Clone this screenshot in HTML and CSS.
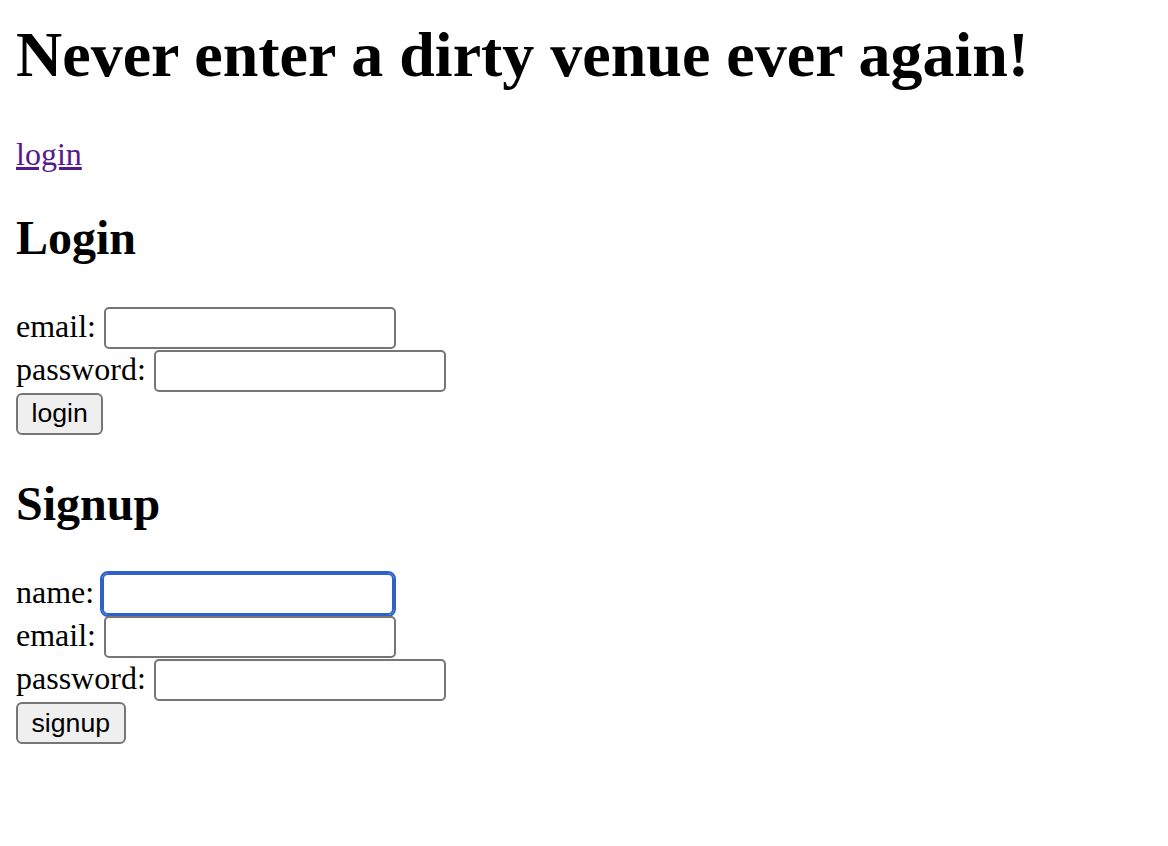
FILE: index.html
```html
<!DOCTYPE html>
<html>
<head>
<meta charset="utf-8">
<title>Venues</title>
<link rel="stylesheet" href="styles.css">
</head>
<body>
<h1 class="title">Never enter a dirty venue ever again!</h1>
<p class="nav"><a class="nav-link" href="#">login</a></p>
<h2 class="section-title">Login</h2>
<form class="form">
  <div class="row"><label class="label">email: </label><input class="field" type="text"></div>
  <div class="row"><label class="label">password: </label><input class="field" type="password"></div>
  <div class="row"><button class="btn" type="button">login</button></div>
</form>
<h2 class="section-title">Signup</h2>
<form class="form">
  <div class="row"><label class="label">name: </label><input class="field field-focus" type="text"></div>
  <div class="row"><label class="label">email: </label><input class="field" type="text"></div>
  <div class="row"><label class="label">password: </label><input class="field" type="password"></div>
  <div class="row"><button class="btn" type="button">signup</button></div>
</form>
</body>
</html>
```
FILE: styles.css
```css
html, body {
  background: #fff;
}
body {
  margin: 0 16px 16px;
  font-family: "Liberation Serif", "Times New Roman", serif;
  font-size: 32px;
  color: #000;
}
.title {
  font-size: 64px;
  font-weight: bold;
  margin: 18px 0 40px;
}
.nav {
  margin: 0 0 -4px;
  padding-top: 4px;
}
.nav-link {
  color: #551a8b;
  text-decoration: underline;
}
.section-title {
  font-size: 48px;
  font-weight: bold;
  margin: 40.84px 0 41.84px;
}
.form {
  margin: 0;
}
.row {
  display: block;
}
.field {
  box-sizing: border-box;
  width: 292px;
  height: 42px;
  border: 2px solid #767676;
  border-radius: 5px;
  padding: 2px 4px;
  font-family: "Liberation Sans", Arial, sans-serif;
  font-size: 26.67px;
  background: #fff;
  vertical-align: baseline;
  margin: 0 0 1px;
}
.field-focus {
  border-color: #2f62c9;
  outline: 2px solid #2f62c9;
  outline-offset: 0;
  border-radius: 6px;
}
.btn {
  box-sizing: border-box;
  height: 42px;
  border: 2px solid #767676;
  border-radius: 6px;
  background: #efefef;
  padding: 2px 13.5px;
  font-family: "Liberation Sans", Arial, sans-serif;
  font-size: 26.67px;
  color: #000;
  margin: 0 0 1px;
}
```
